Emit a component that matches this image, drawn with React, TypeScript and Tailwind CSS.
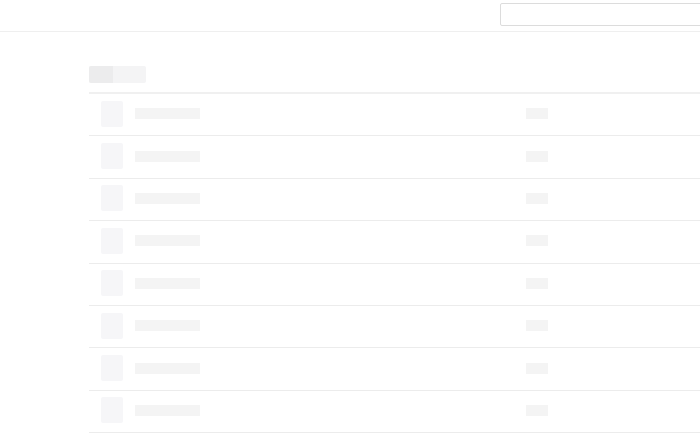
import React from 'react';

const rows = Array.from({ length: 8 }, (_, i) => i);

export default function App() {
  return (
    <div className="h-[437px] w-[700px] overflow-hidden bg-white font-['Liberation_Sans',sans-serif]">
      {/* Top bar */}
      <div className="flex h-[32px] items-start justify-end border-b border-[#efefef] pt-[3px]">
        <div className="h-[23px] w-[220px] shrink-0 -mr-[20px] rounded-[2px] border border-[#dcdcdc] bg-white" />
      </div>

      {/* Skeleton list */}
      <div className="pl-[89px] pt-[34px]">
        <div className="flex h-[17px] w-[57px] overflow-hidden rounded-[2px] bg-[#f4f4f5]">
          <div className="h-full w-[24px] bg-[#ececed]" />
        </div>

        <div className="mt-[9px] border-t-2 border-[#f0f0f0]">
          {rows.map((r) => (
            <div
              key={r}
              className="flex h-[42.4px] items-center border-b border-[#ececec] pb-[2px] pl-[12px]"
            >
              <div className="h-[26px] w-[22px] rounded-[2px] bg-[#f6f6f8]" />
              <div className="ml-[12px] h-[11px] w-[65px] bg-[#f4f4f4]" />
              <div className="ml-[326px] h-[11px] w-[22px] bg-[#f4f4f4]" />
            </div>
          ))}
        </div>
      </div>
    </div>
  );
}
